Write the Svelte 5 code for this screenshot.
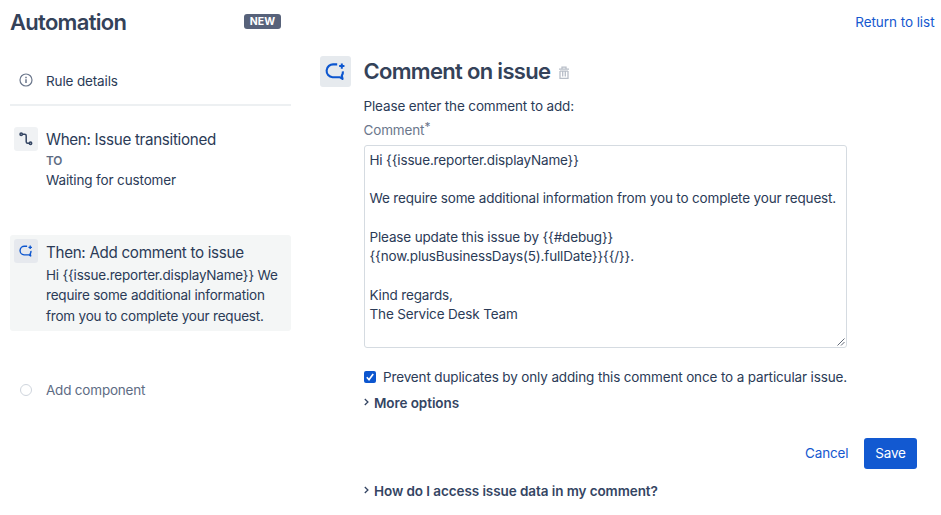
<script>
  let comment = $state(`Hi {{issue.reporter.displayName}}

We require some additional information from you to complete your request.

Please update this issue by {{#debug}}
{{now.plusBusinessDays(5).fullDate}}{{/}}.

Kind regards,
The Service Desk Team`);
  let preventDuplicates = $state(true);
  const summary = 'Hi {{issue.reporter.displayName}} We require some additional information from you to complete your request.';
</script>

{#snippet commentIcon(size)}
  <svg width={size} height={size} viewBox="0 0 20 20" fill="none" stroke="#0c56cf" stroke-width="2" stroke-linejoin="round">
    <path d="M11.6 3.2H8.2a6.1 6.1 0 0 0-1 12.3H14.4l2.3 1.5-.7-3.1A5.8 5.8 0 0 0 17 9.8" />
    <path d="M16 2.3v5M13.5 4.8h5" stroke-width="1.9" />
  </svg>
{/snippet}

{#snippet chevron()}
  <svg class="chevron" width="5" height="8" viewBox="0 0 5 8" fill="none" stroke="#344563" stroke-width="1.3"><path d="M.8 1 3.9 4 .8 7" /></svg>
{/snippet}

<div class="page">
  <aside>
    <header>
      <h1>Automation</h1>
      <span class="badge">NEW</span>
    </header>
    <div class="step details">
      <span class="mark">
        <svg width="14" height="14" viewBox="0 0 14 14" fill="none" stroke="#6b778c" stroke-width="1.2"><circle cx="7" cy="7" r="6" /><path d="M7 6.3v3.8M7 3.8v1.4" stroke-width="1.5" /></svg>
      </span>
      <span class="details-label">Rule details</span>
    </div>
    <section class="step when">
      <span class="mark tile">
        <svg width="14" height="14" viewBox="0 0 14 14" fill="none" stroke="#344563" stroke-width="1.5"><circle cx="2.2" cy="2.3" r="1.2" /><path d="M3.4 2.3h2.3q1.5 0 1.5 1.5v6q0 1.5 1.5 1.5h2" /><circle cx="11.5" cy="11.3" r="1.2" /></svg>
      </span>
      <div>
        <h3>When: Issue transitioned</h3>
        <div class="to">TO</div>
        <div class="state">Waiting for customer</div>
      </div>
    </section>
    <section class="step then">
      <span class="mark tile">{@render commentIcon(14)}</span>
      <div>
        <h3 class="then-title">Then: Add comment to issue</h3>
        <p>{summary}</p>
      </div>
    </section>
    <div class="step add">
      <span class="mark"><i class="ring"></i></span>
      <span class="add-label">Add component</span>
    </div>
  </aside>

  <main>
    <div class="top"><a class="return" href="#list">Return to list</a></div>
    <div class="title">
      <span class="tile large">{@render commentIcon(21)}</span>
      <h2>Comment on issue</h2>
      <svg class="trash" width="12" height="14" viewBox="0 0 12 14" fill="none" stroke="#b8bec8" stroke-width="1.3"><path d="M1 3.2h10M4 3V1.2h4V3M2 5v7.3h8V5M4.7 5.5v5M7.3 5.5v5M2 5.2h8" /></svg>
    </div>
    <div class="form">
      <div class="prompt">Please enter the comment to add:</div>
      <label class="field" for="comment">Comment<sup>*</sup></label>
      <div class="editor">
        <textarea id="comment" spellcheck="false" bind:value={comment}></textarea>
        <svg class="grip" width="8" height="8" viewBox="0 0 8 8" stroke="#626b78" stroke-width="1"><path d="M.5 7.5l7-7M4 7.5l3.5-3.5" /></svg>
      </div>
      <label class="check">
        <input type="checkbox" bind:checked={preventDuplicates} />
        <span class="box">
          <svg width="12" height="12" viewBox="0 0 12 12" fill="none" stroke="#fff" stroke-width="1.7"><path d="M2.8 6.3 5 8.7 9.2 3" /></svg>
        </span>
        <span class="check-label">Prevent duplicates by only adding this comment once to a particular issue.</span>
      </label>
      <div class="expander">{@render chevron()}<span class="more">More options</span></div>
      <div class="actions">
        <button class="cancel">Cancel</button>
        <button class="save">Save</button>
      </div>
      <div class="expander">{@render chevron()}<span class="help">How do I access issue data in my comment?</span></div>
    </div>
  </main>
</div>

<style>
  :global(body) { margin: 0; background: #fff; }
  .page, textarea, button { font-family: Inter, "Liberation Sans", sans-serif; font-size: 13.5px; font-weight: 430; letter-spacing: -.14px; color: #2b3b57; }
  .page { display: flex; width: 941px; height: 515px; overflow: hidden; box-sizing: border-box; padding-left: 10px; white-space: nowrap; }
  .page * { box-sizing: border-box; }
  h1, h2, h3, p { margin: 0; }
  svg { display: block; flex: none; }
  aside { width: 281px; flex: none; }
  header { display: flex; justify-content: space-between; align-items: center; height: 44px; padding-right: 10px; }
  h1 { font-size: 22px; line-height: 30px; font-weight: 600; letter-spacing: -.7px; color: #344259; }
  .badge { width: 37px; height: 15px; margin-top: -2px; border-radius: 3px; background: #57627a; color: #fff; font-size: 10.5px; font-weight: 700; letter-spacing: 0; line-height: 15px; text-align: center; }
  .step { display: flex; }
  .mark { display: grid; place-items: center; flex: none; width: 24px; height: 24px; margin: 0 8px 0 4px; }
  .tile { background: #f0f2f4; border-radius: 3px; }
  .details { height: 62px; padding-top: 25px; border-bottom: 2px solid #edf0f2; }
  .details .mark { margin-top: -1px; }
  .details-label { line-height: 24px; }
  .when { height: 129px; padding-top: 21px; }
  h3 { font-size: 15.2px; line-height: 24px; font-weight: 430; letter-spacing: -.31px; padding-top: 1px; }
  .to { font-size: 11.8px; line-height: 16px; font-weight: 600; padding-top: 1px; color: #5e6c84; }
  .state { line-height: 20px; padding-top: 1px; }
  .then { height: 96px; padding-top: 4px; background: #f4f6f6; border-radius: 3px; }
  .then .tile { background: #e6e9ee; }
  .then-title { padding-top: 2px; }
  p { width: 242px; white-space: normal; line-height: 20.4px; letter-spacing: -.2px; }
  .add { margin-top: 47px; }
  .add-label { line-height: 25px; letter-spacing: -.2px; color: #5e6c84; }
  .ring { width: 12px; height: 12px; border: 1.5px solid #cfd5dd; border-radius: 50%; }
  main { width: 650px; padding-left: 29px; flex: none; }
  .top { height: 56px; display: flex; justify-content: flex-end; padding: 12px 6.5px 0 0; }
  .return { line-height: 20px; letter-spacing: -.06px; color: #1558cf; text-decoration: none; }
  .title { display: flex; align-items: center; height: 31px; }
  .large { display: grid; place-items: center; width: 31px; height: 31px; background: #e6eaee; }
  h2 { margin: -2px 0 0 12.5px; font-size: 22px; line-height: 30px; font-weight: 600; letter-spacing: -.69px; color: #344259; }
  .trash { margin: 2px 0 0 8px; }
  .form { padding-left: 43.5px; width: 527.5px; }
  .prompt { padding-top: 9px; line-height: 20px; }
  .field { display: block; height: 29px; line-height: 29px; color: #6b778c; }
  sup { font-size: 12px; line-height: 0; vertical-align: 4px; }
  .editor { position: relative; height: 203px; width: 483.5px; }
  textarea { display: block; width: 100%; height: 203px; margin: 0; padding: 4.5px 1px 0 5px; border: 1.5px solid #d5dbe1; border-radius: 3px; resize: none; outline: 0; overflow: hidden; background: #fff; line-height: 19.35px; letter-spacing: -.16px; }
  .grip { position: absolute; right: 2px; bottom: 2px; }
  .check { display: flex; align-items: center; height: 20px; margin-top: 19px; }
  .check input { appearance: none; width: 0; height: 0; margin: 0; }
  .box { width: 12px; height: 12px; border-radius: 2px; background: #0c56cf; }
  .check-label { margin-left: 7.5px; }
  .expander { display: flex; align-items: center; height: 20px; margin-top: 6px; font-weight: 600; letter-spacing: -.08px; color: #344563; }
  .chevron { margin: -3px 5.5px 0 0; }
  .actions { display: flex; height: 31px; margin: 25px -69.5px 0 0; justify-content: flex-end; gap: 15.5px; }
  button { border: 0; padding: 0; background: none; line-height: 31px; }
  .cancel { letter-spacing: -.12px; color: #1558cf; }
  .save { width: 53px; border-radius: 3px; background: #1259d1; color: #fff; }
  .actions + .expander { margin-top: 12px; }
</style>
